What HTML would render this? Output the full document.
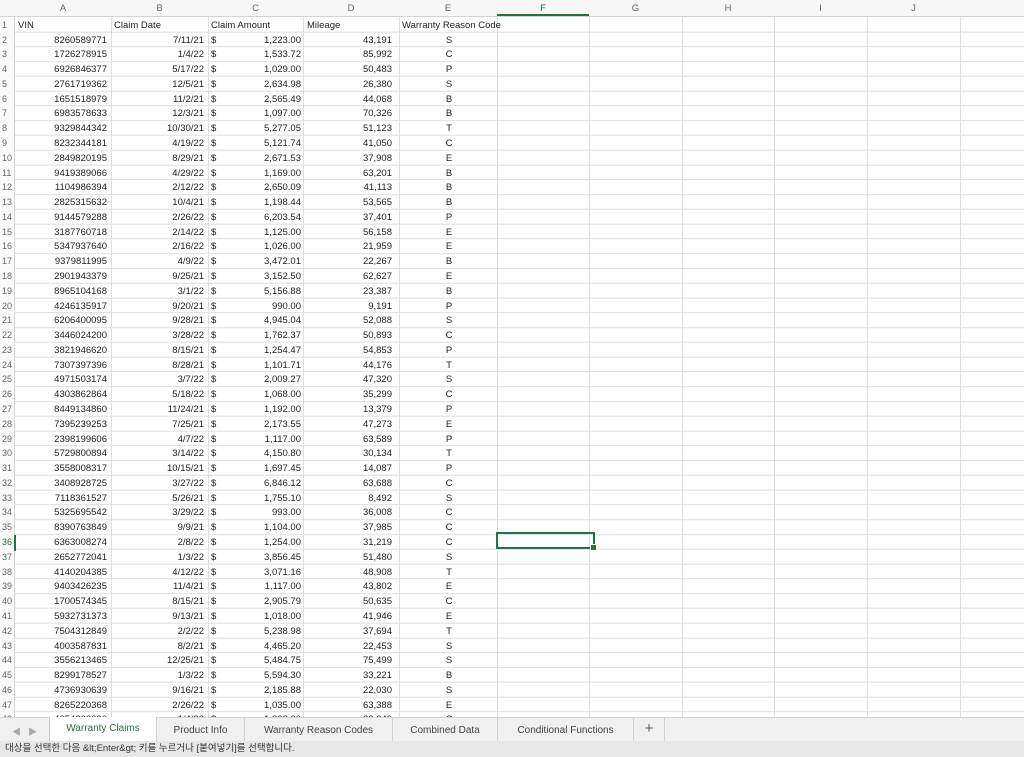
<!DOCTYPE html>
<html><head><meta charset="utf-8"><style>
*{margin:0;padding:0;box-sizing:border-box}
body{width:1024px;height:757px;overflow:hidden;background:#fff;font-family:"Liberation Sans","Noto Sans CJK KR",sans-serif;color:#222;position:relative;font-size:9.5px}
#grid{position:absolute;left:0;top:0;width:1024px;height:717px;overflow:hidden;
background:repeating-linear-gradient(to bottom,transparent 0,transparent 13.78px,#dedede 13.78px,#dedede 14.78px);background-position:0 17.7px;}
.hdr{position:absolute;left:0;top:0;width:1024px;height:17px;background:#f7f7f7;border-bottom:1px solid #d4d4d4;color:#666;font-size:9.5px}
.hdr span{position:absolute;top:3px;text-align:center}
.rh{position:absolute;left:0;top:17px;width:15px;height:700px;background:#fafafa;border-right:1px solid #d4d4d4}
.v{position:absolute;top:0;width:1px;height:717px;background:#dedede}
.r{position:absolute;left:0;height:14.78px;width:1024px;line-height:15.5px;white-space:nowrap}
.r span{position:absolute;top:0}
.n{left:2px;color:#666;font-size:9px}
.a{left:15px;width:92px;text-align:right}
.b{left:111px;width:93px;text-align:right}
.d{left:211px}
.c{left:208px;width:93px;text-align:right}
.m{left:303px;width:89px;text-align:right}
.e{left:399px;width:100px;text-align:center}
#sel{position:absolute;left:496px;top:532px;width:99px;height:17px;border:2px solid #217346}
#sel:after{content:"";position:absolute;right:-4px;bottom:-4px;width:5px;height:5px;background:#217346;border:1px solid #fff}
#tabs{position:absolute;left:0;top:717px;width:1024px;height:24px;background:#f0f0f0;border-top:1px solid #d4d4d4;font-size:10px;color:#444}
#tabs .t{position:absolute;top:0;height:23px;line-height:26px;text-align:center;border-right:1px solid #d0d0d0}
#tabs .act{background:#fff;color:#217346;top:-1px;height:24px;line-height:24px}
#status{position:absolute;left:0;top:741px;width:1024px;height:16px;background:#e6e6e6;font-size:9.5px;line-height:16px;padding-left:5px;color:#333}
</style></head><body>
<div id="grid">
<div class="v" style="left:111px"></div><div class="v" style="left:208px"></div><div class="v" style="left:303px"></div><div class="v" style="left:399px"></div><div class="v" style="left:497px"></div><div class="v" style="left:589px"></div><div class="v" style="left:682px"></div><div class="v" style="left:774px"></div><div class="v" style="left:867px"></div><div class="v" style="left:960px"></div>
<div class="rh"></div>
<div class="hdr">
<span style="left:15px;width:96px">A</span><span style="left:111px;width:97px">B</span><span style="left:208px;width:95px">C</span><span style="left:303px;width:96px">D</span><span style="left:399px;width:98px">E</span><span style="left:497px;width:92px;color:#217346;border-bottom:2px solid #217346;height:16px;top:0;padding-top:3px">F</span><span style="left:589px;width:93px">G</span><span style="left:682px;width:92px">H</span><span style="left:774px;width:93px">I</span><span style="left:867px;width:93px">J</span>
</div>
<div class="r" style="top:17.7px"><span class="n">1</span><span style="left:18px">VIN</span><span style="left:114px">Claim Date</span><span style="left:211px">Claim Amount</span><span style="left:307px">Mileage</span><span style="left:402px">Warranty Reason Code</span></div>
<div class="r" style="top:32.5px"><span class="n">2</span><span class="a">8260589771</span><span class="b">7/11/21</span><span class="d">$</span><span class="c">1,223.00</span><span class="m">43,191</span><span class="e">S</span></div>
<div class="r" style="top:47.3px"><span class="n">3</span><span class="a">1726278915</span><span class="b">1/4/22</span><span class="d">$</span><span class="c">1,533.72</span><span class="m">85,992</span><span class="e">C</span></div>
<div class="r" style="top:62.0px"><span class="n">4</span><span class="a">6926846377</span><span class="b">5/17/22</span><span class="d">$</span><span class="c">1,029.00</span><span class="m">50,483</span><span class="e">P</span></div>
<div class="r" style="top:76.8px"><span class="n">5</span><span class="a">2761719362</span><span class="b">12/5/21</span><span class="d">$</span><span class="c">2,634.98</span><span class="m">26,380</span><span class="e">S</span></div>
<div class="r" style="top:91.6px"><span class="n">6</span><span class="a">1651518979</span><span class="b">11/2/21</span><span class="d">$</span><span class="c">2,565.49</span><span class="m">44,068</span><span class="e">B</span></div>
<div class="r" style="top:106.4px"><span class="n">7</span><span class="a">6983578633</span><span class="b">12/3/21</span><span class="d">$</span><span class="c">1,097.00</span><span class="m">70,326</span><span class="e">B</span></div>
<div class="r" style="top:121.2px"><span class="n">8</span><span class="a">9329844342</span><span class="b">10/30/21</span><span class="d">$</span><span class="c">5,277.05</span><span class="m">51,123</span><span class="e">T</span></div>
<div class="r" style="top:135.9px"><span class="n">9</span><span class="a">8232344181</span><span class="b">4/19/22</span><span class="d">$</span><span class="c">5,121.74</span><span class="m">41,050</span><span class="e">C</span></div>
<div class="r" style="top:150.7px"><span class="n">10</span><span class="a">2849820195</span><span class="b">8/29/21</span><span class="d">$</span><span class="c">2,671.53</span><span class="m">37,908</span><span class="e">E</span></div>
<div class="r" style="top:165.5px"><span class="n">11</span><span class="a">9419389066</span><span class="b">4/29/22</span><span class="d">$</span><span class="c">1,169.00</span><span class="m">63,201</span><span class="e">B</span></div>
<div class="r" style="top:180.3px"><span class="n">12</span><span class="a">1104986394</span><span class="b">2/12/22</span><span class="d">$</span><span class="c">2,650.09</span><span class="m">41,113</span><span class="e">B</span></div>
<div class="r" style="top:195.1px"><span class="n">13</span><span class="a">2825315632</span><span class="b">10/4/21</span><span class="d">$</span><span class="c">1,198.44</span><span class="m">53,565</span><span class="e">B</span></div>
<div class="r" style="top:209.8px"><span class="n">14</span><span class="a">9144579288</span><span class="b">2/26/22</span><span class="d">$</span><span class="c">6,203.54</span><span class="m">37,401</span><span class="e">P</span></div>
<div class="r" style="top:224.6px"><span class="n">15</span><span class="a">3187760718</span><span class="b">2/14/22</span><span class="d">$</span><span class="c">1,125.00</span><span class="m">56,158</span><span class="e">E</span></div>
<div class="r" style="top:239.4px"><span class="n">16</span><span class="a">5347937640</span><span class="b">2/16/22</span><span class="d">$</span><span class="c">1,026.00</span><span class="m">21,959</span><span class="e">E</span></div>
<div class="r" style="top:254.2px"><span class="n">17</span><span class="a">9379811995</span><span class="b">4/9/22</span><span class="d">$</span><span class="c">3,472.01</span><span class="m">22,267</span><span class="e">B</span></div>
<div class="r" style="top:269.0px"><span class="n">18</span><span class="a">2901943379</span><span class="b">9/25/21</span><span class="d">$</span><span class="c">3,152.50</span><span class="m">62,627</span><span class="e">E</span></div>
<div class="r" style="top:283.7px"><span class="n">19</span><span class="a">8965104168</span><span class="b">3/1/22</span><span class="d">$</span><span class="c">5,156.88</span><span class="m">23,387</span><span class="e">B</span></div>
<div class="r" style="top:298.5px"><span class="n">20</span><span class="a">4246135917</span><span class="b">9/20/21</span><span class="d">$</span><span class="c">990.00</span><span class="m">9,191</span><span class="e">P</span></div>
<div class="r" style="top:313.3px"><span class="n">21</span><span class="a">6206400095</span><span class="b">9/28/21</span><span class="d">$</span><span class="c">4,945.04</span><span class="m">52,088</span><span class="e">S</span></div>
<div class="r" style="top:328.1px"><span class="n">22</span><span class="a">3446024200</span><span class="b">3/28/22</span><span class="d">$</span><span class="c">1,762.37</span><span class="m">50,893</span><span class="e">C</span></div>
<div class="r" style="top:342.9px"><span class="n">23</span><span class="a">3821946620</span><span class="b">8/15/21</span><span class="d">$</span><span class="c">1,254.47</span><span class="m">54,853</span><span class="e">P</span></div>
<div class="r" style="top:357.6px"><span class="n">24</span><span class="a">7307397396</span><span class="b">8/28/21</span><span class="d">$</span><span class="c">1,101.71</span><span class="m">44,176</span><span class="e">T</span></div>
<div class="r" style="top:372.4px"><span class="n">25</span><span class="a">4971503174</span><span class="b">3/7/22</span><span class="d">$</span><span class="c">2,009.27</span><span class="m">47,320</span><span class="e">S</span></div>
<div class="r" style="top:387.2px"><span class="n">26</span><span class="a">4303862864</span><span class="b">5/18/22</span><span class="d">$</span><span class="c">1,068.00</span><span class="m">35,299</span><span class="e">C</span></div>
<div class="r" style="top:402.0px"><span class="n">27</span><span class="a">8449134860</span><span class="b">11/24/21</span><span class="d">$</span><span class="c">1,192.00</span><span class="m">13,379</span><span class="e">P</span></div>
<div class="r" style="top:416.8px"><span class="n">28</span><span class="a">7395239253</span><span class="b">7/25/21</span><span class="d">$</span><span class="c">2,173.55</span><span class="m">47,273</span><span class="e">E</span></div>
<div class="r" style="top:431.5px"><span class="n">29</span><span class="a">2398199606</span><span class="b">4/7/22</span><span class="d">$</span><span class="c">1,117.00</span><span class="m">63,589</span><span class="e">P</span></div>
<div class="r" style="top:446.3px"><span class="n">30</span><span class="a">5729800894</span><span class="b">3/14/22</span><span class="d">$</span><span class="c">4,150.80</span><span class="m">30,134</span><span class="e">T</span></div>
<div class="r" style="top:461.1px"><span class="n">31</span><span class="a">3558008317</span><span class="b">10/15/21</span><span class="d">$</span><span class="c">1,697.45</span><span class="m">14,087</span><span class="e">P</span></div>
<div class="r" style="top:475.9px"><span class="n">32</span><span class="a">3408928725</span><span class="b">3/27/22</span><span class="d">$</span><span class="c">6,846.12</span><span class="m">63,688</span><span class="e">C</span></div>
<div class="r" style="top:490.7px"><span class="n">33</span><span class="a">7118361527</span><span class="b">5/26/21</span><span class="d">$</span><span class="c">1,755.10</span><span class="m">8,492</span><span class="e">S</span></div>
<div class="r" style="top:505.4px"><span class="n">34</span><span class="a">5325695542</span><span class="b">3/29/22</span><span class="d">$</span><span class="c">993.00</span><span class="m">36,008</span><span class="e">C</span></div>
<div class="r" style="top:520.2px"><span class="n">35</span><span class="a">8390763849</span><span class="b">9/9/21</span><span class="d">$</span><span class="c">1,104.00</span><span class="m">37,985</span><span class="e">C</span></div>
<div class="r" style="top:535.0px"><span class="n" style="color:#217346;border-right:2px solid #217346;left:0;padding-left:2px;width:16px">36</span><span class="a">6363008274</span><span class="b">2/8/22</span><span class="d">$</span><span class="c">1,254.00</span><span class="m">31,219</span><span class="e">C</span></div>
<div class="r" style="top:549.8px"><span class="n">37</span><span class="a">2652772041</span><span class="b">1/3/22</span><span class="d">$</span><span class="c">3,856.45</span><span class="m">51,480</span><span class="e">S</span></div>
<div class="r" style="top:564.6px"><span class="n">38</span><span class="a">4140204385</span><span class="b">4/12/22</span><span class="d">$</span><span class="c">3,071.16</span><span class="m">48,908</span><span class="e">T</span></div>
<div class="r" style="top:579.3px"><span class="n">39</span><span class="a">9403426235</span><span class="b">11/4/21</span><span class="d">$</span><span class="c">1,117.00</span><span class="m">43,802</span><span class="e">E</span></div>
<div class="r" style="top:594.1px"><span class="n">40</span><span class="a">1700574345</span><span class="b">8/15/21</span><span class="d">$</span><span class="c">2,905.79</span><span class="m">50,635</span><span class="e">C</span></div>
<div class="r" style="top:608.9px"><span class="n">41</span><span class="a">5932731373</span><span class="b">9/13/21</span><span class="d">$</span><span class="c">1,018.00</span><span class="m">41,946</span><span class="e">E</span></div>
<div class="r" style="top:623.7px"><span class="n">42</span><span class="a">7504312849</span><span class="b">2/2/22</span><span class="d">$</span><span class="c">5,238.98</span><span class="m">37,694</span><span class="e">T</span></div>
<div class="r" style="top:638.5px"><span class="n">43</span><span class="a">4003587831</span><span class="b">8/2/21</span><span class="d">$</span><span class="c">4,465.20</span><span class="m">22,453</span><span class="e">S</span></div>
<div class="r" style="top:653.2px"><span class="n">44</span><span class="a">3556213465</span><span class="b">12/25/21</span><span class="d">$</span><span class="c">5,484.75</span><span class="m">75,499</span><span class="e">S</span></div>
<div class="r" style="top:668.0px"><span class="n">45</span><span class="a">8299178527</span><span class="b">1/3/22</span><span class="d">$</span><span class="c">5,594.30</span><span class="m">33,221</span><span class="e">B</span></div>
<div class="r" style="top:682.8px"><span class="n">46</span><span class="a">4736930639</span><span class="b">9/16/21</span><span class="d">$</span><span class="c">2,185.88</span><span class="m">22,030</span><span class="e">S</span></div>
<div class="r" style="top:697.6px"><span class="n">47</span><span class="a">8265220368</span><span class="b">2/26/22</span><span class="d">$</span><span class="c">1,035.00</span><span class="m">63,388</span><span class="e">E</span></div>
<div class="r" style="top:712.4px"><span class="n">48</span><span class="a">4054260000</span><span class="b">1/4/22</span><span class="d">$</span><span class="c">1,222.00</span><span class="m">22,240</span><span class="e">C</span></div>
<div id="sel"></div>
</div>
<div id="tabs">
<span style="position:absolute;left:12px;top:7px;color:#aaa;font-size:9px">◀</span><span style="position:absolute;left:28px;top:7px;color:#aaa;font-size:9px">▶</span>
<div class="t act" style="left:49px;width:108px;border-left:1px solid #d0d0d0">Warranty Claims</div>
<div class="t" style="left:157px;width:88px">Product Info</div>
<div class="t" style="left:245px;width:148px">Warranty Reason Codes</div>
<div class="t" style="left:393px;width:105px">Combined Data</div>
<div class="t" style="left:498px;width:136px">Conditional Functions</div>
<div class="t" style="left:634px;width:31px;font-size:15px;line-height:22px;color:#555">+</div>
</div>
<div id="status">대상을 선택한 다음 &amp;lt;Enter&amp;gt; 키를 누르거나 [붙여넣기]를 선택합니다.</div>
</body></html>
